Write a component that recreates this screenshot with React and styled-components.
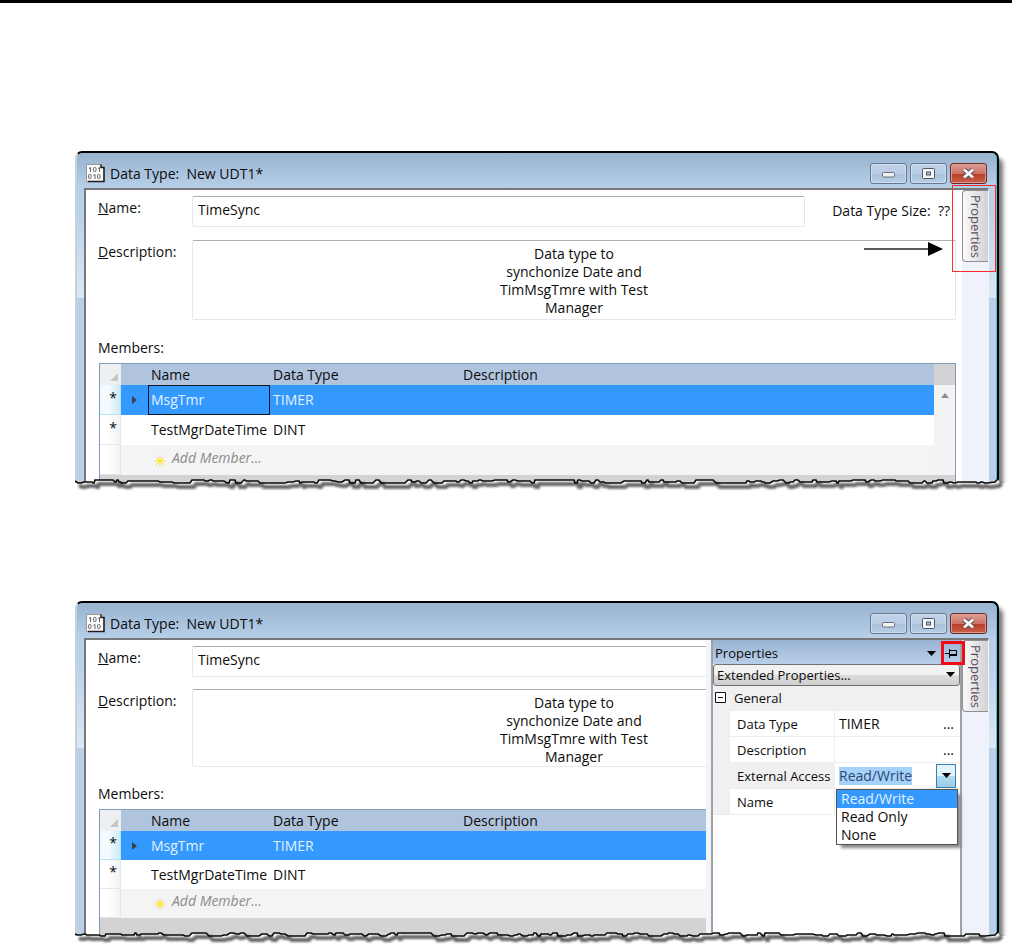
import styled, { createGlobalStyle, css } from "styled-components"

const GlobalStyle = createGlobalStyle`
  * {
    box-sizing: border-box;
  }

  body {
    margin: 0;
    background: #fff;
    color: #0c0c0c;
    font: 14px/18px "Open Sans", "Noto Sans", sans-serif;
  }

  button, input, select, textarea {
    font: inherit;
    color: inherit;
    margin: 0;
  }
`

const Page = styled.main`
  display: grid;
  gap: 118px;
  padding: 148px 13px 13px 75px;
  border-top: 3px solid #000;
`

const Frame = styled.section`
  position: relative;
  border: 2px solid #000;
  border-left-color: #c6d2d6;
  border-bottom: 0;
  border-radius: 7px 7px 0 0;
  background: linear-gradient(
    to bottom,
    #98b3d0 0,
    #b7cfe8 35px,
    #b9d1ea 60px,
    #dce8f6 145px,
    #b9d0e8 145px
  );
  box-shadow: inset -1px 0 0 #4cc3dc, 5px 6px 4px -1px #777;
`

const TitleBar = styled.header`
  display: flex;
  align-items: center;
  gap: 5px;
  height: 35px;
  padding: 6px 10px 0 9px;
`

const Title = styled.h2`
  flex: 1;
  margin: 0;
  font-size: 14px;
  font-weight: 400;
  white-space: pre;
`

const Buttons = styled.div`
  display: flex;
  gap: 3px;
`

const WindowButton = styled.button`
  display: grid;
  place-items: center;
  width: 37px;
  height: 21px;
  padding: 0;
  border: 1px solid #66788f;
  border-radius: 3px;
  background: linear-gradient(#c2d3e8 0, #b8cce4 50%, #a9c0da 50%, #b9cee6 100%);
  box-shadow: inset 0 0 0 1px #cfdef0;

  ${(props) =>
    props.$close &&
    css`
      border-color: #6b2a2a;
      background: linear-gradient(#dc9e94 0, #cd7465 50%, #b83a25 50%, #c9614b 100%);
      box-shadow: inset 0 0 0 1px #dd9c90;
    `}
`

const Body = styled.div`
  position: relative;
  display: flex;
  margin: 0 8px 0 7px;
  border-top: 2px solid #777;
  border-left: 2px solid #777;
  border-right: 1px solid #f4f4f4;
  background: #fff;
`

const Form = styled.form`
  display: flex;
  flex-direction: column;
  flex: 1;
  min-width: 0;
  padding: 6px 6px 0 12px;
`

const Field = styled.div`
  display: grid;
  grid-template-columns: 94px 1fr auto;
  margin-bottom: ${(props) => (props.$compact ? 12 : 13)}px;
`

const Label = styled.label`
  padding-top: 3px;

  &::first-letter {
    text-decoration: underline;
  }
`

const inputBox = css`
  display: block;
  width: 100%;
  border: 1px solid #e3e9ef;
  border-top-color: #abadb3;
  border-radius: 2px;
  background: #fff;
  outline: 0;
`

const TextInput = styled.input`
  ${inputBox}
  height: 31px;
  padding: 0 5px 5px;
`

const TextArea = styled.textarea`
  ${inputBox}
  grid-column: span 2;
  height: ${(props) => (props.$compact ? 78 : 80)}px;
  padding: 4px 5px 0;
  overflow: hidden;
  resize: none;
  text-align: center;
`

const TypeSize = styled.span`
  width: 151px;
  padding: 6px 6px 0 0;
  text-align: right;
  white-space: pre;
`

const MembersLabel = styled.h3`
  margin: 6px 0;
  font-size: 14px;
  font-weight: 400;
`

const TableBox = styled.div`
  display: flex;
  margin-left: 1px;
  padding-bottom: ${(props) => (props.$compact ? 18 : 8)}px;
  border: 1px solid #7f9db9;
  border-bottom: 0;
  background: #d3d3d3;
`

const Table = styled.table`
  flex: 1;
  min-width: 0;
  border-collapse: separate;
  border-spacing: 0;
  table-layout: fixed;

  th, td {
    height: ${(props) => (props.$compact ? 29 : 30)}px;
    padding: 0 3px;
    text-align: left;
    font-weight: 400;
    white-space: nowrap;
  }

  thead th {
    height: 21px;
    background: #b0c4de;
  }
`

const Row = styled.tr`
  background: ${(props) => (props.$selected ? "#3399ff" : "#fff")};
  color: ${(props) => (props.$selected ? "#e4f1ff" : "inherit")};
`

const AddRow = styled.tr`
  background: #f4f4f4;
  color: #8c8c8c;
  font-style: italic;
`

const RowHead = styled.th`
  && {
    padding: 0 3px 4px;
    border: 1px solid ${(props) => (props.$selected ? "#b8e3f4" : "#e4e6ea")};
    border-width: 0 1px 1px 0;
    background: ${(props) =>
      props.$selected
        ? "linear-gradient(to right, #f4fbfe 40%, #cdebf6)"
        : "linear-gradient(to right, #fff 40%, #f1f2f5)"};
    color: #0c0c0c;
    text-align: right;
  }
`

const CornerHead = styled.th`
  && {
    background: #eeeff0;
    text-align: right;
  }

  svg {
    display: block;
    margin: 5px 0 0 auto;
  }
`

const ArrowCell = styled.td`
  && {
    padding: 0 0 0 11px;
  }

  svg {
    display: block;
  }
`

const NameCell = styled.td`
  ${(props) => props.$editing && "box-shadow: inset 0 0 0 1px #10141c;"}
`

const AddLabel = styled.span`
  display: flex;
  align-items: center;
  gap: 6px;
  padding: 0 0 5px 3px;

  svg {
    flex: none;
    margin-top: 6px;
  }
`

const ScrollBar = styled.div`
  width: 21px;
  padding-top: 21px;
  background: linear-gradient(#d3d3d3 21px, #f3f3f3 21px);
`

const ScrollButton = styled.button`
  display: grid;
  place-items: center;
  width: 100%;
  height: 20px;
  padding: 0;
  border: 0;
  background: none;
`

const TabStrip = styled.aside`
  width: 26px;
  background: #eff2fb;
`

const Tab = styled.button`
  display: flex;
  align-items: center;
  width: 26px;
  height: 72px;
  padding: 4px 4px;
  border: 1px solid #8f8f96;
  border-right: 0;
  border-radius: 4px 0 0 4px;
  background: linear-gradient(to right, #fafafa, #d2d2d4);
  color: #5b4c66;
  font-size: 13px;
  writing-mode: vertical-rl;
`

const TabMarker = styled.span`
  position: absolute;
  top: -5px;
  right: -8px;
  width: 44px;
  height: 87px;
  border: 1px solid #ff2a2a;
`

const Pointer = styled.svg`
  position: absolute;
  top: 52px;
  right: 45px;
`

const Tear = styled.svg`
  position: absolute;
  left: -2px;
  bottom: -14px;
  width: calc(100% + 14px);
  height: 24px;
`

const Flyout = styled.aside`
  position: absolute;
  top: 0;
  right: 26px;
  bottom: 0;
  width: 256px;
  border-left: 5px solid #f1f4fb;
  background: #fff;
`

const FlyoutInner = styled.div`
  height: 100%;
  border-left: 2px solid #a0a0a0;
  border-right: 2px solid #a0a0a0;
`

const FlyoutBar = styled.header`
  display: flex;
  align-items: center;
  height: 24px;
  padding: 2px 0 0 2px;
  background: linear-gradient(#98b3d2, #b9cfe9);
`

const FlyoutTitle = styled.h3`
  flex: 1;
  margin: 0;
  font-size: 13px;
  font-weight: 400;
`

const IconButton = styled.button`
  display: grid;
  place-items: center;
  width: 19px;
  height: 20px;
  padding: 0;
  border: 0;
  background: none;
`

const PinMarker = styled.span`
  position: absolute;
  top: 1px;
  right: 23px;
  width: 24px;
  height: 24px;
  border: 3px solid #f00b18;
`

const SelectBox = styled.div`
  position: relative;

  svg {
    position: absolute;
    top: 8px;
    right: 5px;
    pointer-events: none;
  }
`

const Select = styled.select`
  display: block;
  width: 100%;
  height: 22px;
  padding: 0 20px 0 3px;
  border: 1px solid #707070;
  border-radius: 3px;
  background: linear-gradient(#f2f2f2 50%, #dcdcdc 50%, #cfcfcf);
  font-size: 13px;
  appearance: none;
`

const PropTable = styled.table`
  width: 100%;
  border-collapse: separate;
  border-spacing: 0;
  table-layout: fixed;

  td, th {
    height: 26px;
    padding: 0 4px;
    text-align: left;
    font-weight: 400;
    white-space: nowrap;
  }

  tbody td, tbody th {
    border-bottom: 1px solid #ededed;
  }
`

const GroupHead = styled.th`
  && {
    height: 25px;
    padding: 0 0 2px 2px;
    background: #f0f0f0;
    font-size: 13px;
  }

  span {
    display: flex;
    align-items: center;
    gap: 8px;
  }
`

const Gutter = styled.td`
  background: #f0f0f0;
`

const PropName = styled.th`
  && {
    padding: 0 0 0 7px;
    border-right: 1px solid #ededed;
    background: ${(props) => (props.$active ? "#f0f0f0" : "#fff")};
    font-size: 13px;
  }
`

const PropValue = styled.div`
  display: flex;
  align-items: center;
  justify-content: space-between;
`

const MoreButton = styled.button`
  padding: 0 2px;
  border: 0;
  background: none;
`

const ComboSelect = styled.select`
  height: 18px;
  padding: 0;
  border: 0;
  background: #a6d1fb;
  color: #2b4a6b;
  appearance: none;
  field-sizing: content;
`

const ComboButton = styled.button`
  display: grid;
  place-items: center;
  width: 20px;
  height: 24px;
  padding: 0;
  border: 1px solid #3c7fb1;
  background: linear-gradient(#e3f3fb 50%, #b5dcf0 50%, #9acbe6);
`

const ListBox = styled.ul`
  position: absolute;
  top: 149px;
  right: 4px;
  width: 122px;
  margin: 0;
  padding: 0;
  border: 1px solid #555;
  background: #fff;
  box-shadow: 4px 4px 3px -1px #888;
  list-style: none;
`

const ListItem = styled.li`
  height: 18px;
  padding: 0 4px;
  background: ${(props) => (props.$selected ? "#3399ff" : "#fff")};
  color: ${(props) => (props.$selected ? "#e4f1ff" : "#0c0c0c")};
`

const members = [
  { name: "MsgTmr", type: "TIMER", selected: true },
  { name: "TestMgrDateTime", type: "DINT" },
]

const description = "Data type to\nsynchonize Date and\nTimMsgTmre with Test\nManager"

// pseudo random torn paper edge, the same for the same seed
function tornEdge(seed, width) {
  let n = seed
  const next = () => {
    n = (n * 1103515245 + 12345) % 2147483648
    return n / 2147483648
  }
  const points = [[0, 8]]
  let x = 0
  while (x < width - 16) {
    x += 1 + Math.floor(next() * 3)
    const y = 7 + Math.floor(next() * 4)
    points.push([x, y])
    x += next() > 0.85 ? 12 : 1 + Math.floor(next() * 5)
    points.push([x, y])
  }
  points.push([width - 4, 9], [width - 1, 6])
  return points.map((p) => p.join(" ")).join(" L")
}

function TornEdge({ seed }) {
  const line = tornEdge(seed, 924)
  return (
    <Tear viewBox="0 0 934 24" preserveAspectRatio="none" aria-hidden="true">
      <defs>
        <filter id={`soft${seed}`} x="-5%" y="-100%" width="110%" height="300%">
          <feGaussianBlur stdDeviation="1.3" />
        </filter>
      </defs>
      <path d={`M${line} L925 10 L934 10 L934 24 L0 24 Z`} fill="#fff" />
      <path
        d={`M${line}`}
        transform="translate(4 4)"
        fill="none"
        stroke="#666"
        strokeWidth="4"
        filter={`url(#soft${seed})`}
      />
      <path d={`M${line}`} fill="none" stroke="#0a0a0a" strokeWidth="1.7" />
    </Tear>
  )
}

function DocIcon() {
  return (
    <svg width="19" height="19" viewBox="0 0 19 19" aria-hidden="true">
      <path d="M.5 .5H15L18 3.5V17.5H.5Z" fill="#fafafa" stroke="#999" />
      <path d="M15 .5V3.5H18V17.5H2" fill="none" stroke="#1c1c1c" strokeWidth="1.5" />
      <g fill="none" stroke="#666" strokeWidth="1">
        <path d="M3 4.5L4.5 3.5V8M12 4.5L13.5 3.5V8" />
        <rect x="7.5" y="3.5" width="2.5" height="4" rx="1" />
        <rect x="2.5" y="10.5" width="2.5" height="4" rx="1" />
        <path d="M7.5 11.5L9 10.5V15" />
        <rect x="11.5" y="10.5" width="2.5" height="4" rx="1" />
      </g>
    </svg>
  )
}

function DownArrow() {
  return (
    <svg width="9" height="5" viewBox="0 0 9 5" aria-hidden="true">
      <path d="M0 0H9L4.5 5Z" fill="#000" />
    </svg>
  )
}

function WindowButtons() {
  return (
    <Buttons>
      <WindowButton type="button" aria-label="Minimize">
        <svg width="15" height="13" viewBox="0 0 15 13">
          <rect x="1.5" y="5.5" width="12" height="4.5" rx="1" fill="#f0f0f0" stroke="#6b7380" />
        </svg>
      </WindowButton>
      <WindowButton type="button" aria-label="Maximize">
        <svg width="13" height="11" viewBox="0 0 13 11">
          <rect x=".5" y=".5" width="12" height="10" rx="1" fill="#f6f6f6" stroke="#4f5763" />
          <rect x="4.5" y="4" width="4" height="3" fill="#a9bfd8" stroke="#4f5763" />
        </svg>
      </WindowButton>
      <WindowButton type="button" aria-label="Close" $close>
        <svg width="15" height="13" viewBox="0 0 15 13">
          <path d="M3 2.5L12 10.5M12 2.5L3 10.5" stroke="#5e4a50" strokeWidth="5" />
          <path d="M3 2.5L12 10.5M12 2.5L3 10.5" stroke="#f8f8f8" strokeWidth="3" />
        </svg>
      </WindowButton>
    </Buttons>
  )
}

function MembersTable({ compact, editing }) {
  return (
    <TableBox $compact={compact}>
      <Table $compact={compact}>
        <colgroup>
          <col style={{ width: 21 }} />
          <col style={{ width: 27 }} />
          <col style={{ width: 120 }} />
          <col style={{ width: 190 }} />
          <col />
        </colgroup>
        <thead>
          <tr>
            <CornerHead>
              <svg width="8" height="8" viewBox="0 0 8 8" aria-hidden="true">
                <path d="M8 0V8H0Z" fill="#c4c6c8" />
              </svg>
            </CornerHead>
            <th />
            <th>Name</th>
            <th>Data Type</th>
            <th>Description</th>
          </tr>
        </thead>
        <tbody>
          {members.map((member) => (
            <Row key={member.name} $selected={member.selected}>
              <RowHead $selected={member.selected}>*</RowHead>
              <ArrowCell>
                {member.selected && (
                  <svg width="5" height="8" viewBox="0 0 5 8" aria-hidden="true">
                    <path d="M0 0L5 4L0 8Z" fill="#3c4046" />
                  </svg>
                )}
              </ArrowCell>
              <NameCell $editing={editing && member.selected}>{member.name}</NameCell>
              <td>{member.type}</td>
              <td />
            </Row>
          ))}
          <AddRow>
            <RowHead />
            <td />
            <td colSpan={3}>
              <AddLabel>
                <svg width="12" height="12" viewBox="0 0 12 12" aria-hidden="true">
                  <path d="M6 0V12M0 6H12M2 2L10 10M10 2L2 10" stroke="#f2d56a" />
                  <circle cx="6" cy="6" r="2.5" fill="#ffee2e" />
                </svg>
                Add Member...
              </AddLabel>
            </td>
          </AddRow>
        </tbody>
      </Table>
      <ScrollBar>
        <ScrollButton type="button" aria-label="Scroll up">
          <svg width="8" height="5" viewBox="0 0 8 5">
            <path d="M4 0L8 5H0Z" fill="#8c8c8c" />
          </svg>
        </ScrollButton>
      </ScrollBar>
    </TableBox>
  )
}

function PropertiesFlyout() {
  return (
    <Flyout>
      <FlyoutInner>
        <FlyoutBar>
          <FlyoutTitle>Properties</FlyoutTitle>
          <IconButton type="button" aria-label="Window position">
            <DownArrow />
          </IconButton>
          <IconButton type="button" aria-label="Auto hide">
            <svg width="12" height="9" viewBox="0 0 12 9">
              <path d="M0 4.5H4M4.5 0V9M4 1.5H11.5V6" fill="none" stroke="#000" />
              <path d="M4 6H12" stroke="#000" strokeWidth="2" />
            </svg>
          </IconButton>
        </FlyoutBar>
        <SelectBox>
          <Select aria-label="Property set">
            <option>Extended Properties...</option>
          </Select>
          <DownArrow />
        </SelectBox>
        <PropTable>
          <colgroup>
            <col style={{ width: 17 }} />
            <col style={{ width: 105 }} />
            <col />
          </colgroup>
          <thead>
            <tr>
              <GroupHead colSpan={3}>
                <span>
                  <svg width="11" height="11" viewBox="0 0 11 11" aria-hidden="true">
                    <path d="M.5 .5H10.5V10.5H.5ZM3 5.5H8" fill="#fff" stroke="#111" />
                  </svg>
                  General
                </span>
              </GroupHead>
            </tr>
          </thead>
          <tbody>
            <tr>
              <Gutter />
              <PropName>Data Type</PropName>
              <td>
                <PropValue>
                  TIMER
                  <MoreButton type="button">...</MoreButton>
                </PropValue>
              </td>
            </tr>
            <tr>
              <Gutter />
              <PropName>Description</PropName>
              <td>
                <PropValue>
                  <span />
                  <MoreButton type="button">...</MoreButton>
                </PropValue>
              </td>
            </tr>
            <tr>
              <Gutter />
              <PropName $active>
                <label htmlFor="access">External Access</label>
              </PropName>
              <td>
                <PropValue>
                  <ComboSelect id="access" defaultValue="Read/Write">
                    <option>Read/Write</option>
                  </ComboSelect>
                  <ComboButton type="button" aria-label="Open list">
                    <DownArrow />
                  </ComboButton>
                </PropValue>
              </td>
            </tr>
            <tr>
              <Gutter />
              <PropName>Name</PropName>
              <td />
            </tr>
          </tbody>
        </PropTable>
        <ListBox role="listbox" aria-label="External Access">
          <ListItem role="option" aria-selected="true" $selected>
            Read/Write
          </ListItem>
          <ListItem role="option">Read Only</ListItem>
          <ListItem role="option">None</ListItem>
        </ListBox>
      </FlyoutInner>
    </Flyout>
  )
}

function DataTypeWindow({ id, compact, open }) {
  return (
    <Frame>
      <TitleBar>
        <DocIcon />
        <Title>{"Data Type:  New UDT1*"}</Title>
        <WindowButtons />
      </TitleBar>
      <Body>
        <Form>
          <Field $compact={compact}>
            <Label htmlFor={`${id}-name`}>Name:</Label>
            <TextInput id={`${id}-name`} defaultValue="TimeSync" />
            <TypeSize>{"Data Type Size:  ??"}</TypeSize>
          </Field>
          <Field $compact={compact}>
            <Label htmlFor={`${id}-description`}>Description:</Label>
            <TextArea id={`${id}-description`} $compact={compact} defaultValue={description} />
          </Field>
          <MembersLabel>Members:</MembersLabel>
          <MembersTable compact={compact} editing={!open} />
        </Form>
        <TabStrip>
          <Tab type="button">Properties</Tab>
        </TabStrip>
        {open ? (
          <>
            <PropertiesFlyout />
            <PinMarker />
          </>
        ) : (
          <>
            <TabMarker />
            <Pointer width="79" height="14" viewBox="0 0 79 14" aria-hidden="true">
              <path d="M0 7H66" stroke="#222" strokeWidth="1.5" />
              <path d="M64 0L79 7L64 14Z" fill="#000" />
            </Pointer>
          </>
        )}
      </Body>
      <TornEdge seed={compact ? 77 : 31} />
    </Frame>
  )
}

function App() {
  return (
    <>
      <GlobalStyle />
      <Page>
        <DataTypeWindow id="first" />
        <DataTypeWindow id="second" compact open />
      </Page>
    </>
  )
}

export default App
